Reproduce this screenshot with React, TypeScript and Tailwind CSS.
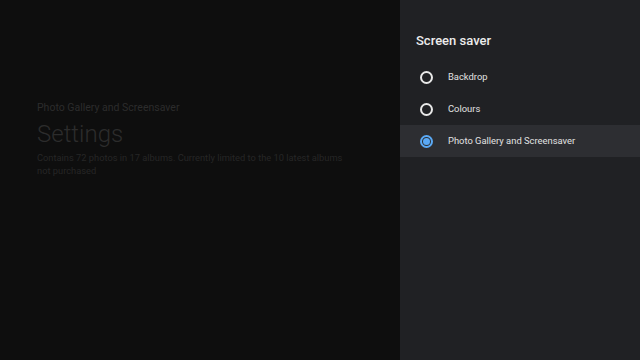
import React from "react";

const items = [
  { label: "Backdrop", selected: false },
  { label: "Colours", selected: false },
  { label: "Photo Gallery and Screensaver", selected: true },
];

function Radio({ selected }: { selected: boolean }) {
  if (selected) {
    return (
      <div className="w-[13px] h-[13px] rounded-full border-[2px] border-[#5aa9f5] flex items-center justify-center">
        <div className="w-[7px] h-[7px] rounded-full bg-[#5aa9f5]" />
      </div>
    );
  }
  return <div className="w-[13px] h-[13px] rounded-full border-[2px] border-[#e8e8e8]" />;
}

export default function App() {
  return (
    <div
      className="w-[640px] h-[360px] flex overflow-hidden"
      style={{ fontFamily: "Roboto, 'Noto Sans', sans-serif" }}
    >
      <div className="w-[400px] h-full bg-[#0e0e0e] pl-[37px] pt-[101px]">
        <div className="text-[10.5px] leading-[13px] text-[#2c2c2c]">Photo Gallery and Screensaver</div>
        <div className="text-[24px] leading-[28px] font-light text-[#2c2c2c] mt-[6px]">Settings</div>
        <div className="text-[9.3px] leading-[13px] text-[#262626] mt-[3px] w-[330px]">
          Contains 72 photos in 17 albums. Currently limited to the 10 latest albums
          <br />
          not purchased
        </div>
      </div>
      <div className="w-[240px] h-full bg-[#202124] pt-[32px]">
        <div className="pl-[16px] text-[13px] leading-[17px] font-medium text-[#ececec]">Screen saver</div>
        <div className="mt-[12px] flex flex-col">
          {items.map((it) => (
            <div
              key={it.label}
              className={
                "h-[32px] flex items-center pl-[20px] " + (it.selected ? "bg-[#2d2e32]" : "")
              }
            >
              <Radio selected={it.selected} />
              <span className="ml-[15px] text-[9.4px] text-[#e2e2e2]">{it.label}</span>
            </div>
          ))}
        </div>
      </div>
    </div>
  );
}
